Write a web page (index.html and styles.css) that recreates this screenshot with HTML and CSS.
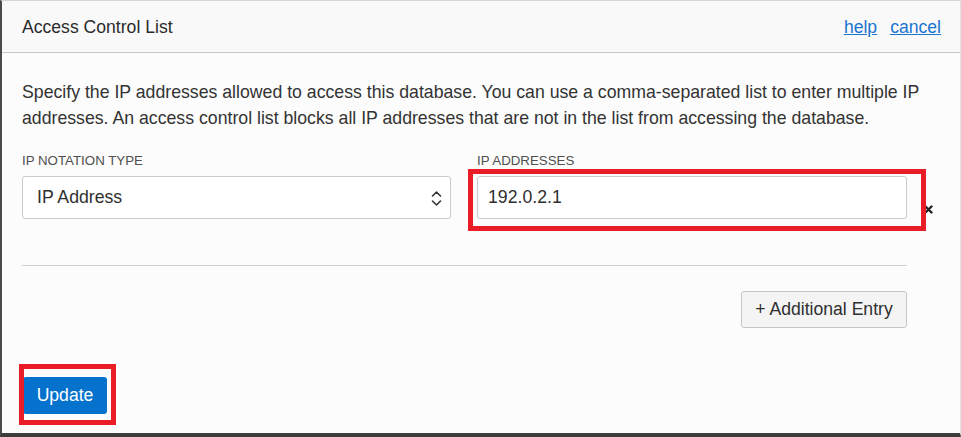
FILE: index.html
```html
<!DOCTYPE html>
<html lang="en">
<head>
<meta charset="utf-8">
<title>Access Control List</title>
<link rel="stylesheet" href="styles.css">
</head>
<body>
<div class="dialog">
  <header class="dialog-header">
    <h1 class="dialog-title">Access Control List</h1>
    <nav class="header-links">
      <a href="#" class="link">help</a>
      <a href="#" class="link">cancel</a>
    </nav>
  </header>
  <main class="dialog-body">
    <p class="intro">Specify the IP addresses allowed to access this database. You can use a comma-separated list to enter multiple IP addresses. An access control list blocks all IP addresses that are not in the list from accessing the database.</p>
    <div class="entry">
      <div class="fields">
        <div class="field">
          <label class="field-label">IP NOTATION TYPE</label>
          <div class="control select">
            <span>IP Address</span>
            <svg class="chevrons" width="11" height="17" viewBox="0 0 11 17" aria-hidden="true">
              <path d="M1.5 6 L5.5 2 L9.5 6" fill="none" stroke="#333" stroke-width="1.6" stroke-linecap="round" stroke-linejoin="round"/>
              <path d="M1.5 11 L5.5 15 L9.5 11" fill="none" stroke="#333" stroke-width="1.6" stroke-linecap="round" stroke-linejoin="round"/>
            </svg>
          </div>
        </div>
        <div class="field">
          <label class="field-label">IP ADDRESSES</label>
          <div class="highlight-wrap">
            <div class="control text-input">192.0.2.1</div>
            <span class="highlight highlight-input"></span>
          </div>
        </div>
      </div>
      <button class="remove" aria-label="Remove entry">
        <svg width="9" height="9" viewBox="0 0 9 9" aria-hidden="true">
          <path d="M1.5 1.5 L7.5 7.5 M7.5 1.5 L1.5 7.5" stroke="#222" stroke-width="2.4" stroke-linecap="round"/>
        </svg>
      </button>
    </div>
    <hr class="divider">
    <div class="add-row">
      <button class="btn-secondary">+ Additional Entry</button>
    </div>
    <div class="footer">
      <div class="highlight-wrap">
        <button class="btn-primary">Update</button>
        <span class="highlight highlight-update"></span>
      </div>
    </div>
  </main>
</div>
</body>
</html>
```
FILE: styles.css
```css
* { box-sizing: border-box; }
html, body {
  margin: 0;
  padding: 0;
  width: 961px;
  height: 437px;
  overflow: hidden;
  background: #3d3d3d;
  font-family: "Liberation Sans", Arial, sans-serif;
}
.dialog {
  width: 961px;
  height: 437px;
  background: #fcfcfc;
  border-left: 2px solid #4a4a4a;
  border-top: 1px solid #d3d5d8;
  border-bottom: 4px solid #3d3d3d;
  border-right: 1px solid #e2e2e2;
  display: flex;
  flex-direction: column;
}
.dialog-header {
  height: 52px;
  flex: none;
  display: flex;
  align-items: center;
  justify-content: space-between;
  padding: 2px 19px 0 20px;
  background: #f9f9fa;
  border-bottom: 1px solid #c3c8d0;
}
.dialog-title {
  margin: 0;
  font-size: 17.6px;
  font-weight: normal;
  color: #2b2b2b;
}
.header-links {
  display: flex;
  gap: 13px;
}
.link {
  font-size: 17.6px;
  color: #1b74d0;
  text-decoration: underline;
}
.dialog-body {
  padding: 26px 16px 0 20px;
  flex: 1;
  display: flex;
  flex-direction: column;
}
.intro {
  margin: 0;
  font-size: 17.7px;
  line-height: 26px;
  color: #333;
}
.entry {
  margin-top: 22px;
  display: flex;
  align-items: flex-end;
}
.fields {
  width: 885px;
  display: grid;
  grid-template-columns: 429px 430px;
  column-gap: 26px;
}
.field-label {
  display: block;
  font-size: 13.3px;
  line-height: 16px;
  color: #4f4f4f;
  margin-bottom: 7px;
}
.control {
  height: 43px;
  border: 1px solid #c9cbce;
  border-radius: 3px;
  background: #fff;
  font-size: 17.7px;
  color: #2f2f2f;
  display: flex;
  align-items: center;
}
.select {
  padding: 0 8px 0 14px;
  justify-content: space-between;
}
.chevrons { display: block; margin-top: 1px; }
.text-input {
  padding: 0 10px;
}
.highlight-wrap {
  position: relative;
}
.highlight {
  position: absolute;
  border: 5px solid #ea1c26;
  pointer-events: none;
}
.highlight-input {
  left: -9px;
  top: -7px;
  right: -19px;
  bottom: -12px;
}
.remove {
  margin: 0 0 5px 17px;
  padding: 0;
  border: 0;
  background: none;
  display: flex;
  width: 9px;
  height: 9px;
}
.divider {
  width: 885px;
  margin: 46px 0 0 0;
  border: 0;
  border-top: 1px solid #cfcfcf;
  height: 0;
}
.add-row {
  width: 885px;
  margin-top: 25px;
  display: flex;
  justify-content: flex-end;
}
.btn-secondary {
  height: 37px;
  width: 166px;
  padding: 0;
  border: 1px solid #c3c5c8;
  border-radius: 3px;
  background: #f4f4f5;
  font-family: inherit;
  font-size: 17.6px;
  color: #2f2f2f;
}
.footer {
  margin-top: 49px;
  padding-left: 1px;
  display: flex;
}
.btn-primary {
  display: block;
  height: 37px;
  width: 84px;
  padding: 0;
  border: 0;
  border-radius: 3px;
  background: #0572ce;
  color: #fff;
  font-family: inherit;
  font-size: 17.6px;
}
.highlight-update {
  left: -4px;
  top: -13px;
  right: -9px;
  bottom: -11px;
}
```
